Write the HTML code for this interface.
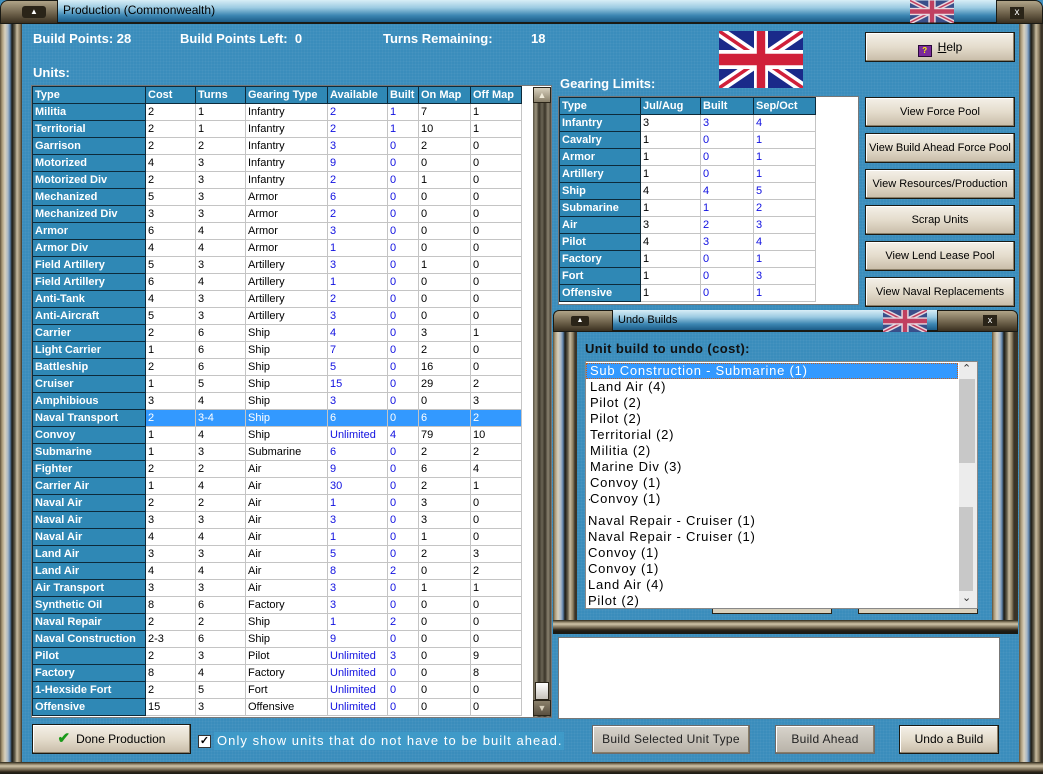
<!DOCTYPE html>
<html><head><meta charset="utf-8">
<style>
*{box-sizing:border-box;margin:0;padding:0}
body{width:1043px;height:774px;overflow:hidden;position:relative;background:#3a8cbb;font-family:"Liberation Sans",sans-serif;font-size:11px}
.abs{position:absolute}
.bg{background:#3a8dbc;background-image:radial-gradient(rgba(255,255,255,.06) 1px,transparent 1px);background-size:3px 3px}
.vbar{background:linear-gradient(90deg,#5a4e38 0,#a89878 2px,#d8d0bc 5px,#a8b8c8 8px,#5a80a8 10px,#1a1a14 12px,#6a6450 15px,#c8bca0 17px,#8a7c60 20px,#3a3428 22px)}
.hbar{background:linear-gradient(180deg,#2a2418 0,#8a7e64 2px,#d0c4a8 4px,#6a5e48 8px,#2a2418 10px,#1a1a14 12px)}
.title{background:linear-gradient(180deg,#d8eef6 0,#9ccbe2 35%,#3d86b2 70%,#1c5c88 100%);border-bottom:2px solid #1a1a14;font-size:12px;color:#000;padding-left:6px;line-height:20px}
.cap{background:linear-gradient(180deg,#b0a488,#6a5e48 60%,#3a3020);border:1px solid #1a1a14}
table{border-collapse:collapse;table-layout:fixed}
.ut td{height:17px;border:1px solid #c4c4c4;padding:0 2px;line-height:15px;white-space:nowrap;overflow:hidden;color:#000}
.ut td.t{background:#2f88b5;color:#fff;font-weight:bold;border:1px solid #0d2a3a}
.ut tr.h td{background:#2f88b5;color:#fff;font-weight:bold;border:1px solid #0d2a3a}
.ut td.b{color:#1010e0}
.ut tr.s td{background:#3399ff;color:#fff}
.ut tr.s td.t{background:#2f88b5}
.btn{position:absolute;background:linear-gradient(180deg,#f4f0e8 0,#e4dccc 50%,#c8bca8 100%);border:1px solid #1a1a14;box-shadow:inset -1px -1px 0 #8a7e68,inset 1px 1px 0 #fff;text-align:center;font-size:11px;color:#000;white-space:nowrap}
.btn.g{background:linear-gradient(180deg,#d8d4cc,#b8b2a8);border:1px solid #6a6a6a;color:#222;font-size:12px;letter-spacing:.3px}
.lbl{position:absolute;color:#fff;font-weight:bold;font-size:13px}
.li{position:absolute;left:4px;font-size:13px;letter-spacing:.75px;color:#000;line-height:16px;white-space:nowrap}
</style></head><body>
<div class="abs bg" style="left:0;top:0;width:1043px;height:774px"></div>
<div class="abs vbar" style="left:0;top:22px;width:22px;height:745px"></div>
<div class="abs vbar" style="left:1019px;top:22px;width:24px;height:745px"></div>
<div class="abs hbar" style="left:0;top:762px;width:1043px;height:12px"></div>
<div class="abs title" style="left:57px;top:0;width:940px;height:24px">Production (Commonwealth)</div>
<div class="abs cap" style="left:0;top:0;width:58px;height:24px;border-radius:8px 0 0 0"></div>
<div class="abs" style="left:22px;top:6px;width:24px;height:12px;background:#2a2418;border-radius:3px;color:#fff;font-size:8px;text-align:center;line-height:12px">▲</div>
<div class="abs cap" style="left:996px;top:0;width:47px;height:24px;border-radius:0 8px 0 0"></div>
<div class="abs" style="left:1010px;top:7px;width:14px;height:12px;background:#2a2418;color:#fff;font-size:10px;text-align:center;line-height:12px">x</div>
<svg class="abs" style="left:910px;top:0" width="44" height="23" viewBox="0 0 60 30"><rect width="60" height="30" fill="#3a4f8a"/><path d="M0,0 60,30M60,0 0,30" stroke="#e8d8e0" stroke-width="6"/><path d="M0,0 60,30M60,0 0,30" stroke="#c04060" stroke-width="2"/><path d="M30,0v30M0,15h60" stroke="#e8d8e0" stroke-width="10"/><path d="M30,0v30M0,15h60" stroke="#c04060" stroke-width="6"/></svg>

<div class="lbl" style="left:33px;top:31px">Build Points: 28</div>
<div class="lbl" style="left:180px;top:31px">Build Points Left:&nbsp; 0</div>
<div class="lbl" style="left:383px;top:31px">Turns Remaining:</div>
<div class="lbl" style="left:531px;top:31px">18</div>
<div class="lbl" style="left:33px;top:65px">Units:</div>
<div class="lbl" style="left:560px;top:76px">Gearing Limits:</div>

<svg class="abs" style="left:719px;top:31px" width="84" height="57" viewBox="0 0 60 30" preserveAspectRatio="none"><rect width="60" height="30" fill="#1a2a8a"/><path d="M0,0 60,30M60,0 0,30" stroke="#fff" stroke-width="6"/><path d="M0,0 60,30M60,0 0,30" stroke="#d0203a" stroke-width="2"/><path d="M30,0v30M0,15h60" stroke="#fff" stroke-width="10"/><path d="M30,0v30M0,15h60" stroke="#d0203a" stroke-width="6"/></svg>

<div class="abs" style="left:31px;top:85px;width:521px;height:633px;background:#fff;border:1px solid #777"></div>
<table class="ut abs" style="left:32px;top:86px;width:489px">
<colgroup><col style="width:113px"><col style="width:50px"><col style="width:50px"><col style="width:82px"><col style="width:60px"><col style="width:31px"><col style="width:52px"><col style="width:51px"></colgroup>
<tr class="h"><td>Type</td><td>Cost</td><td>Turns</td><td>Gearing Type</td><td>Available</td><td>Built</td><td>On Map</td><td>Off Map</td></tr>
<tr><td class="t">Militia</td><td>2</td><td>1</td><td>Infantry</td><td class="b">2</td><td class="b">1</td><td>7</td><td>1</td></tr>
<tr><td class="t">Territorial</td><td>2</td><td>1</td><td>Infantry</td><td class="b">2</td><td class="b">1</td><td>10</td><td>1</td></tr>
<tr><td class="t">Garrison</td><td>2</td><td>2</td><td>Infantry</td><td class="b">3</td><td class="b">0</td><td>2</td><td>0</td></tr>
<tr><td class="t">Motorized</td><td>4</td><td>3</td><td>Infantry</td><td class="b">9</td><td class="b">0</td><td>0</td><td>0</td></tr>
<tr><td class="t">Motorized Div</td><td>2</td><td>3</td><td>Infantry</td><td class="b">2</td><td class="b">0</td><td>1</td><td>0</td></tr>
<tr><td class="t">Mechanized</td><td>5</td><td>3</td><td>Armor</td><td class="b">6</td><td class="b">0</td><td>0</td><td>0</td></tr>
<tr><td class="t">Mechanized Div</td><td>3</td><td>3</td><td>Armor</td><td class="b">2</td><td class="b">0</td><td>0</td><td>0</td></tr>
<tr><td class="t">Armor</td><td>6</td><td>4</td><td>Armor</td><td class="b">3</td><td class="b">0</td><td>0</td><td>0</td></tr>
<tr><td class="t">Armor Div</td><td>4</td><td>4</td><td>Armor</td><td class="b">1</td><td class="b">0</td><td>0</td><td>0</td></tr>
<tr><td class="t">Field Artillery</td><td>5</td><td>3</td><td>Artillery</td><td class="b">3</td><td class="b">0</td><td>1</td><td>0</td></tr>
<tr><td class="t">Field Artillery</td><td>6</td><td>4</td><td>Artillery</td><td class="b">1</td><td class="b">0</td><td>0</td><td>0</td></tr>
<tr><td class="t">Anti-Tank</td><td>4</td><td>3</td><td>Artillery</td><td class="b">2</td><td class="b">0</td><td>0</td><td>0</td></tr>
<tr><td class="t">Anti-Aircraft</td><td>5</td><td>3</td><td>Artillery</td><td class="b">3</td><td class="b">0</td><td>0</td><td>0</td></tr>
<tr><td class="t">Carrier</td><td>2</td><td>6</td><td>Ship</td><td class="b">4</td><td class="b">0</td><td>3</td><td>1</td></tr>
<tr><td class="t">Light Carrier</td><td>1</td><td>6</td><td>Ship</td><td class="b">7</td><td class="b">0</td><td>2</td><td>0</td></tr>
<tr><td class="t">Battleship</td><td>2</td><td>6</td><td>Ship</td><td class="b">5</td><td class="b">0</td><td>16</td><td>0</td></tr>
<tr><td class="t">Cruiser</td><td>1</td><td>5</td><td>Ship</td><td class="b">15</td><td class="b">0</td><td>29</td><td>2</td></tr>
<tr><td class="t">Amphibious</td><td>3</td><td>4</td><td>Ship</td><td class="b">3</td><td class="b">0</td><td>0</td><td>3</td></tr>
<tr class="s"><td class="t">Naval Transport</td><td>2</td><td>3-4</td><td>Ship</td><td class="b">6</td><td class="b">0</td><td>6</td><td>2</td></tr>
<tr><td class="t">Convoy</td><td>1</td><td>4</td><td>Ship</td><td class="b">Unlimited</td><td class="b">4</td><td>79</td><td>10</td></tr>
<tr><td class="t">Submarine</td><td>1</td><td>3</td><td>Submarine</td><td class="b">6</td><td class="b">0</td><td>2</td><td>2</td></tr>
<tr><td class="t">Fighter</td><td>2</td><td>2</td><td>Air</td><td class="b">9</td><td class="b">0</td><td>6</td><td>4</td></tr>
<tr><td class="t">Carrier Air</td><td>1</td><td>4</td><td>Air</td><td class="b">30</td><td class="b">0</td><td>2</td><td>1</td></tr>
<tr><td class="t">Naval Air</td><td>2</td><td>2</td><td>Air</td><td class="b">1</td><td class="b">0</td><td>3</td><td>0</td></tr>
<tr><td class="t">Naval Air</td><td>3</td><td>3</td><td>Air</td><td class="b">3</td><td class="b">0</td><td>3</td><td>0</td></tr>
<tr><td class="t">Naval Air</td><td>4</td><td>4</td><td>Air</td><td class="b">1</td><td class="b">0</td><td>1</td><td>0</td></tr>
<tr><td class="t">Land Air</td><td>3</td><td>3</td><td>Air</td><td class="b">5</td><td class="b">0</td><td>2</td><td>3</td></tr>
<tr><td class="t">Land Air</td><td>4</td><td>4</td><td>Air</td><td class="b">8</td><td class="b">2</td><td>0</td><td>2</td></tr>
<tr><td class="t">Air Transport</td><td>3</td><td>3</td><td>Air</td><td class="b">3</td><td class="b">0</td><td>1</td><td>1</td></tr>
<tr><td class="t">Synthetic Oil</td><td>8</td><td>6</td><td>Factory</td><td class="b">3</td><td class="b">0</td><td>0</td><td>0</td></tr>
<tr><td class="t">Naval Repair</td><td>2</td><td>2</td><td>Ship</td><td class="b">1</td><td class="b">2</td><td>0</td><td>0</td></tr>
<tr><td class="t">Naval Construction</td><td>2-3</td><td>6</td><td>Ship</td><td class="b">9</td><td class="b">0</td><td>0</td><td>0</td></tr>
<tr><td class="t">Pilot</td><td>2</td><td>3</td><td>Pilot</td><td class="b">Unlimited</td><td class="b">3</td><td>0</td><td>9</td></tr>
<tr><td class="t">Factory</td><td>8</td><td>4</td><td>Factory</td><td class="b">Unlimited</td><td class="b">0</td><td>0</td><td>8</td></tr>
<tr><td class="t">1-Hexside Fort</td><td>2</td><td>5</td><td>Fort</td><td class="b">Unlimited</td><td class="b">0</td><td>0</td><td>0</td></tr>
<tr><td class="t">Offensive</td><td>15</td><td>3</td><td>Offensive</td><td class="b">Unlimited</td><td class="b">0</td><td>0</td><td>0</td></tr>
</table>
<div class="abs" style="left:533px;top:87px;width:18px;height:630px;background:linear-gradient(90deg,#5a5444,#9a927c 3px,#3a3428 6px,#6a6454 9px,#3a3428 12px,#8a8270 15px,#4a4436)"></div>
<div class="abs" style="left:533px;top:87px;width:18px;height:16px;background:linear-gradient(#d8d0bc,#8a806a);border:1px solid #2a2418;color:#f0ead8;font-size:9px;text-align:center;line-height:14px">▲</div>
<div class="abs" style="left:535px;top:682px;width:14px;height:18px;background:linear-gradient(#fff,#c8c4bc);border:1px solid #2a2418"></div>
<div class="abs" style="left:533px;top:700px;width:18px;height:16px;background:linear-gradient(#8a806a,#5a5040);border:1px solid #2a2418;color:#d8d0bc;font-size:9px;text-align:center;line-height:14px">▼</div>

<div class="abs" style="left:558px;top:96px;width:301px;height:209px;background:#fff;border:1px solid #777"></div>
<table class="ut abs" style="left:559px;top:97px;width:256px">
<colgroup><col style="width:81px"><col style="width:60px"><col style="width:53px"><col style="width:62px"></colgroup>
<tr class="h"><td>Type</td><td>Jul/Aug</td><td>Built</td><td>Sep/Oct</td></tr>
<tr><td class="t">Infantry</td><td>3</td><td class="b">3</td><td class="b">4</td></tr>
<tr><td class="t">Cavalry</td><td>1</td><td class="b">0</td><td class="b">1</td></tr>
<tr><td class="t">Armor</td><td>1</td><td class="b">0</td><td class="b">1</td></tr>
<tr><td class="t">Artillery</td><td>1</td><td class="b">0</td><td class="b">1</td></tr>
<tr><td class="t">Ship</td><td>4</td><td class="b">4</td><td class="b">5</td></tr>
<tr><td class="t">Submarine</td><td>1</td><td class="b">1</td><td class="b">2</td></tr>
<tr><td class="t">Air</td><td>3</td><td class="b">2</td><td class="b">3</td></tr>
<tr><td class="t">Pilot</td><td>4</td><td class="b">3</td><td class="b">4</td></tr>
<tr><td class="t">Factory</td><td>1</td><td class="b">0</td><td class="b">1</td></tr>
<tr><td class="t">Fort</td><td>1</td><td class="b">0</td><td class="b">3</td></tr>
<tr><td class="t">Offensive</td><td>1</td><td class="b">0</td><td class="b">1</td></tr>
</table>

<div class="btn" style="left:865px;top:32px;width:150px;height:30px;line-height:28px;font-size:12px"><span style="display:inline-block;width:14px;height:12px;background:#7a2a9a;border:1px solid #2a0a3a;vertical-align:-2px;margin-right:6px;color:#ff0;font-size:8px;line-height:10px;font-weight:bold">?</span><u>H</u>elp</div>
<div class="btn" style="left:865px;top:97px;width:150px;height:30px;line-height:28px">View Force Pool</div>
<div class="btn" style="left:865px;top:133px;width:150px;height:30px;line-height:28px">View Build Ahead Force Pool</div>
<div class="btn" style="left:865px;top:169px;width:150px;height:30px;line-height:28px">View Resources/Production</div>
<div class="btn" style="left:865px;top:205px;width:150px;height:30px;line-height:28px">Scrap Units</div>
<div class="btn" style="left:865px;top:241px;width:150px;height:30px;line-height:28px">View Lend Lease Pool</div>
<div class="btn" style="left:865px;top:277px;width:150px;height:30px;line-height:28px">View Naval Replacements</div>

<div class="abs" style="left:558px;top:637px;width:442px;height:82px;background:#fff;border:1px solid #777"></div>

<div class="abs vbar" style="left:553px;top:330px;width:24px;height:302px"></div>
<div class="abs vbar" style="left:992px;top:330px;width:26px;height:302px"></div>
<div class="abs bg" style="left:577px;top:330px;width:415px;height:290px"></div>
<div class="abs hbar" style="left:553px;top:620px;width:465px;height:14px"></div>
<div class="abs title" style="left:612px;top:310px;width:330px;height:22px;line-height:20px;font-size:11px">Undo Builds</div>
<div class="abs cap" style="left:553px;top:310px;width:60px;height:22px;border-radius:6px 0 0 0"></div>
<div class="abs" style="left:571px;top:316px;width:18px;height:10px;background:#2a2418;border-radius:2px;color:#fff;font-size:7px;text-align:center;line-height:10px">▲</div>
<svg class="abs" style="left:883px;top:310px" width="44" height="22" viewBox="0 0 60 30" preserveAspectRatio="none"><rect width="60" height="30" fill="#3a4f8a"/><path d="M0,0 60,30M60,0 0,30" stroke="#e8d8e0" stroke-width="6"/><path d="M0,0 60,30M60,0 0,30" stroke="#c04060" stroke-width="2"/><path d="M30,0v30M0,15h60" stroke="#e8d8e0" stroke-width="10"/><path d="M30,0v30M0,15h60" stroke="#c04060" stroke-width="6"/></svg>
<div class="abs cap" style="left:937px;top:310px;width:81px;height:22px;border-radius:0 6px 0 0"></div>
<div class="abs" style="left:983px;top:315px;width:14px;height:11px;background:#2a2418;color:#fff;font-size:9px;text-align:center;line-height:11px">x</div>
<div class="abs" style="left:585px;top:341px;font-size:13px;font-weight:bold;color:#111;letter-spacing:.4px">Unit build to undo (cost):</div>
<div class="abs" style="left:712px;top:600px;width:120px;height:14px;background:#d8d0bc;border:1px solid #2a2418"></div>
<div class="abs" style="left:858px;top:600px;width:120px;height:14px;background:#d8d0bc;border:1px solid #2a2418"></div>
<div class="abs" style="left:585px;top:361px;width:393px;height:248px;background:#fff;border:1px solid #888;overflow:hidden">
<div class="abs" style="left:0;top:1px;width:372px;height:16px;background:#3399ff;border:1px dotted #c06020"></div>
<div class="li" style="top:1px;color:#fff">Sub Construction - Submarine (1)</div>
<div class="li" style="top:17px">Land Air (4)</div>
<div class="li" style="top:33px">Pilot (2)</div>
<div class="li" style="top:49px">Pilot (2)</div>
<div class="li" style="top:65px">Territorial (2)</div>
<div class="li" style="top:81px">Militia (2)</div>
<div class="li" style="top:97px">Marine Div (3)</div>
<div class="li" style="top:113px">Convoy (1)</div>
<div class="li" style="top:137px;height:8px;overflow:hidden;left:2px"><span style="position:relative;top:-9px">Convoy (1)</span></div>
<div class="li" style="top:129px;background:#fff">Convoy (1)</div>
<div class="li" style="top:151px;left:2px">Naval Repair - Cruiser (1)</div>
<div class="li" style="top:167px;left:2px">Naval Repair - Cruiser (1)</div>
<div class="li" style="top:183px;left:2px">Convoy (1)</div>
<div class="li" style="top:199px;left:2px">Convoy (1)</div>
<div class="li" style="top:215px;left:2px">Land Air (4)</div>
<div class="li" style="top:231px;left:2px">Pilot (2)</div>
<div class="abs" style="left:373px;top:0;width:18px;height:246px;background:#ececec"></div>
<div class="abs" style="left:373px;top:17px;width:16px;height:84px;background:#c8c8c8"></div>
<div class="abs" style="left:373px;top:145px;width:14px;height:84px;background:#c8c8c8"></div>
<div class="abs" style="left:376px;top:0;font-size:11px;color:#333">&#8963;</div>
<div class="abs" style="left:376px;top:229px;font-size:11px;color:#333">&#8964;</div>
</div>

<div class="btn" style="left:32px;top:724px;width:159px;height:30px;line-height:28px;font-size:12px"><span style="color:#1a9a1a;font-weight:bold;font-size:15px;margin-right:6px">✔</span>Done Production</div>
<div class="abs" style="left:214px;top:732px;width:350px;height:18px;background:#3f9ac8"></div>
<div class="abs" style="left:198px;top:735px;width:13px;height:13px;background:#fff;border:1px solid #333;font-size:11px;line-height:11px;text-align:center;font-weight:bold">✓</div>
<div class="abs" style="left:217px;top:733px;font-size:13px;color:#fff;letter-spacing:1.05px;white-space:nowrap">Only show units that do not have to be built ahead.</div>
<div class="btn g" style="left:592px;top:725px;width:158px;height:29px;line-height:27px">Build Selected Unit Type</div>
<div class="btn g" style="left:775px;top:725px;width:100px;height:29px;line-height:27px">Build Ahead</div>
<div class="btn" style="left:899px;top:725px;width:100px;height:29px;line-height:27px;font-size:12px">Undo a Build</div>
</body></html>
